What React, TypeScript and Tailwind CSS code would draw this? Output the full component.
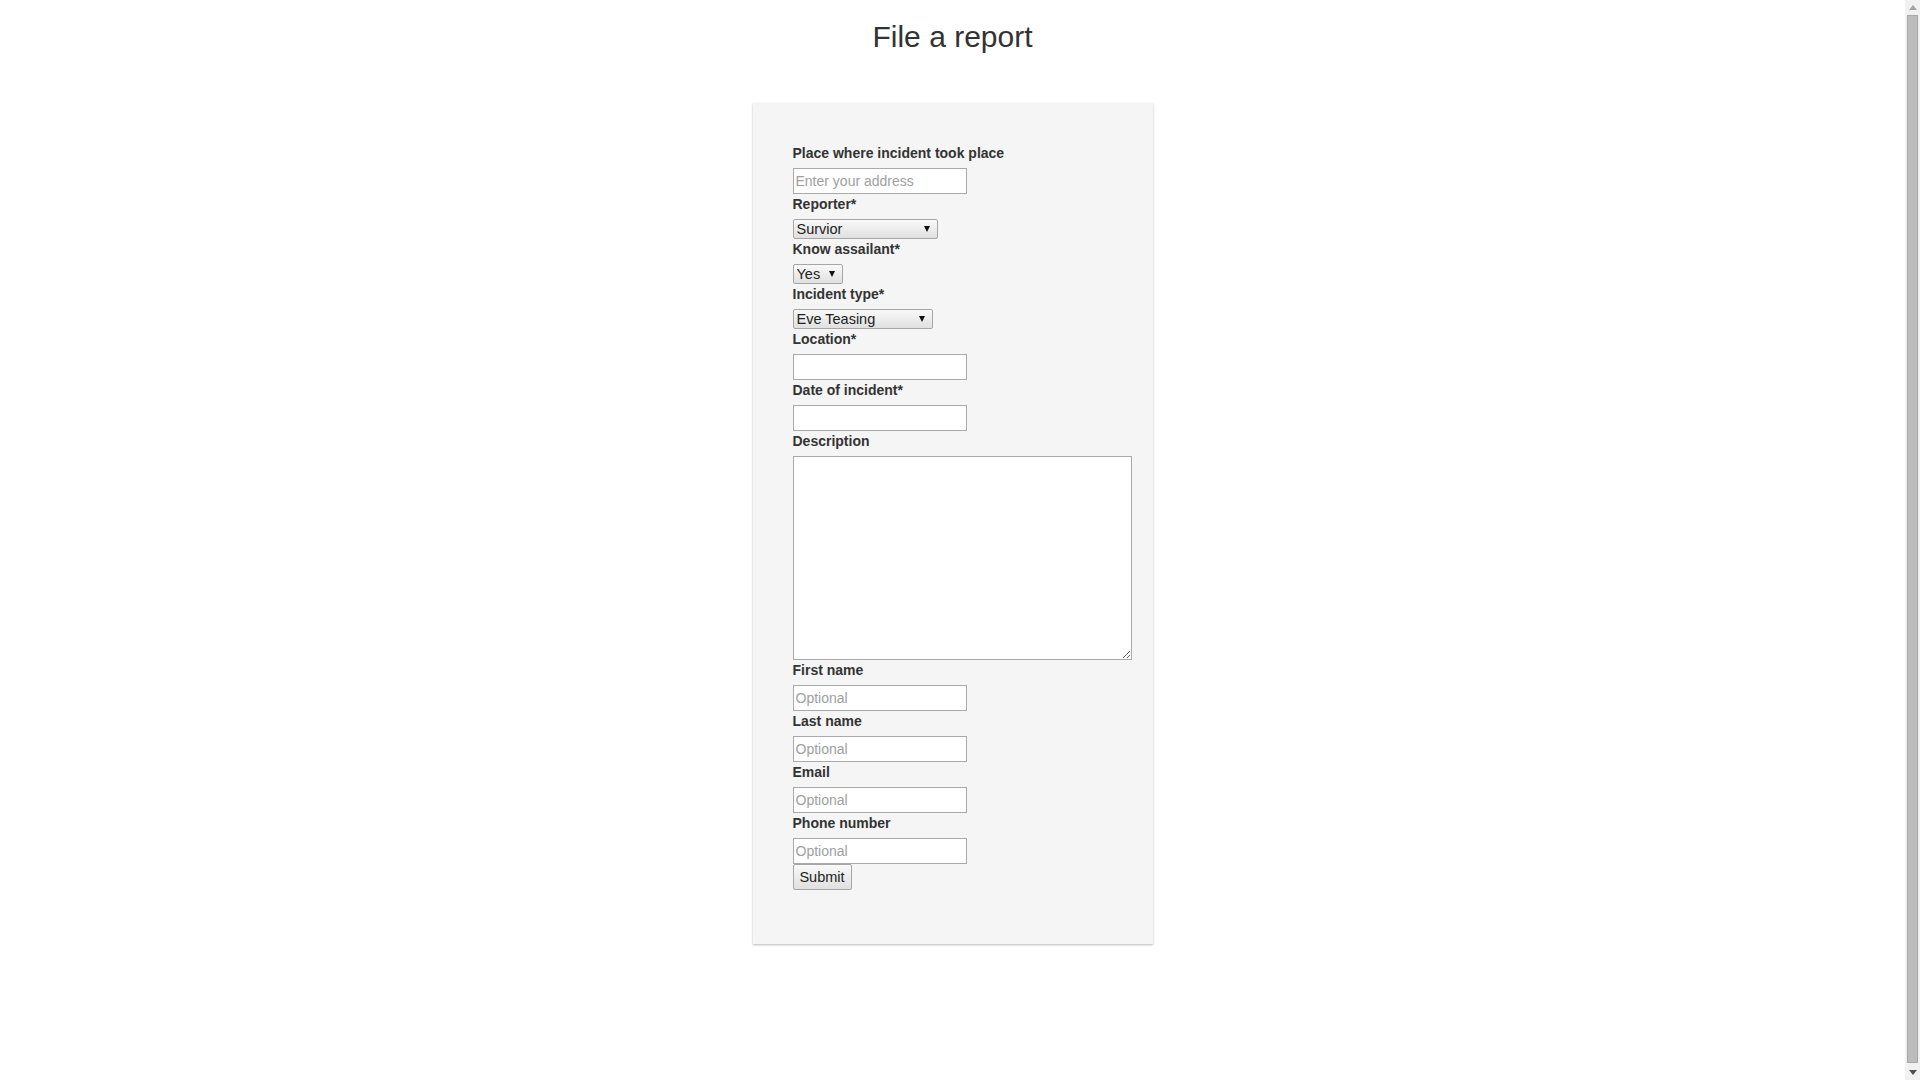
import React from "react";

const labelCls = "block text-[14px] leading-[20px] font-bold text-[#333] mb-[5px]";
const inputCls =
  "block w-[174px] h-[26px] border border-[#a9a9a9] bg-white px-[2px] text-[14px] leading-[20px] text-[#333] placeholder:text-[#a0a0a0] outline-none";

function Select({ value, width, options }: { value: string; width: string; options: string[] }) {
  return (
    <div className={`relative h-[20px] ${width}`}>
      <select
        defaultValue={value}
        className="block h-[20px] w-full appearance-none rounded-[2px] border border-[#a6a6a6] bg-linear-to-b from-[#f9f9f9] to-[#e0e0e0] pl-[3px] pr-[14px] text-[14.5px] leading-[18px] text-[#222] outline-none"
      >
        {options.map((o) => (
          <option key={o}>{o}</option>
        ))}
      </select>
      <svg
        className="pointer-events-none absolute right-[8px] top-[7px]"
        width="6"
        height="6"
        viewBox="0 0 6 6"
      >
        <path d="M0 0 H6 L3 6 Z" fill="#111" />
      </svg>
    </div>
  );
}

function Scrollbar() {
  return (
    <div className="flex h-[1080px] w-[15px] shrink-0 flex-col items-center bg-[#f1f1f1]">
      <div className="flex h-[15px] items-center justify-center">
        <svg width="8" height="5" viewBox="0 0 8 5">
          <path d="M0 5 L4 0 L8 5 Z" fill="#a3a3a3" />
        </svg>
      </div>
      <div className="mb-[2px] w-[11px] flex-1 border border-[#a8a8a8] bg-[#bcbcbc]" />
      <div className="flex h-[15px] items-center justify-center">
        <svg width="8" height="5" viewBox="0 0 8 5">
          <path d="M0 0 L8 0 L4 5 Z" fill="#505050" />
        </svg>
      </div>
    </div>
  );
}

export default function App() {
  return (
    <div className="flex h-[1080px] overflow-hidden bg-white font-['Liberation_Sans',Arial,sans-serif] text-[#333]">
      <div className="flex-1">
        <h2 className="pt-[20px] text-center text-[30px] leading-[33px] font-normal text-[#333]">File a report</h2>
        <div className="mx-auto mt-[50px] w-[400px] bg-[#f5f5f5] px-[40px] pt-[40px] pb-[54px] shadow-[0_1px_2px_rgba(0,0,0,0.28)]">
          <form className="flex flex-col items-start" onSubmit={(e) => e.preventDefault()}>
            <label className={labelCls}>Place where incident took place</label>
            <input className={inputCls} placeholder="Enter your address" />

            <label className={labelCls}>Reporter*</label>
            <Select value="Survior" width="w-[145px]" options={["Survior", "Witness"]} />

            <label className={labelCls}>Know assailant*</label>
            <Select value="Yes" width="w-[50px]" options={["Yes", "No"]} />

            <label className={labelCls}>Incident type*</label>
            <Select value="Eve Teasing" width="w-[140px]" options={["Eve Teasing", "Stalking", "Assault"]} />

            <label className={labelCls}>Location*</label>
            <input className={inputCls} />

            <label className={labelCls}>Date of incident*</label>
            <input className={inputCls} />

            <label className={labelCls}>Description</label>
            <textarea className="block h-[204px] w-[339px] shrink-0 resize border border-[#a9a9a9] bg-white p-[2px] text-[14px] outline-none" />

            <label className={labelCls}>First name</label>
            <input className={inputCls} placeholder="Optional" />

            <label className={labelCls}>Last name</label>
            <input className={inputCls} placeholder="Optional" />

            <label className={labelCls}>Email</label>
            <input className={inputCls} placeholder="Optional" />

            <label className={labelCls}>Phone number</label>
            <input className={inputCls} placeholder="Optional" />

            <button
              type="submit"
              className="h-[26px] w-[59px] rounded-[2px] border border-[#a6a6a6] bg-linear-to-b from-[#f9f9f9] to-[#e0e0e0] text-[14.5px] leading-[20px] text-[#222]"
            >
              Submit
            </button>
          </form>
        </div>
      </div>
      <Scrollbar />
    </div>
  );
}
